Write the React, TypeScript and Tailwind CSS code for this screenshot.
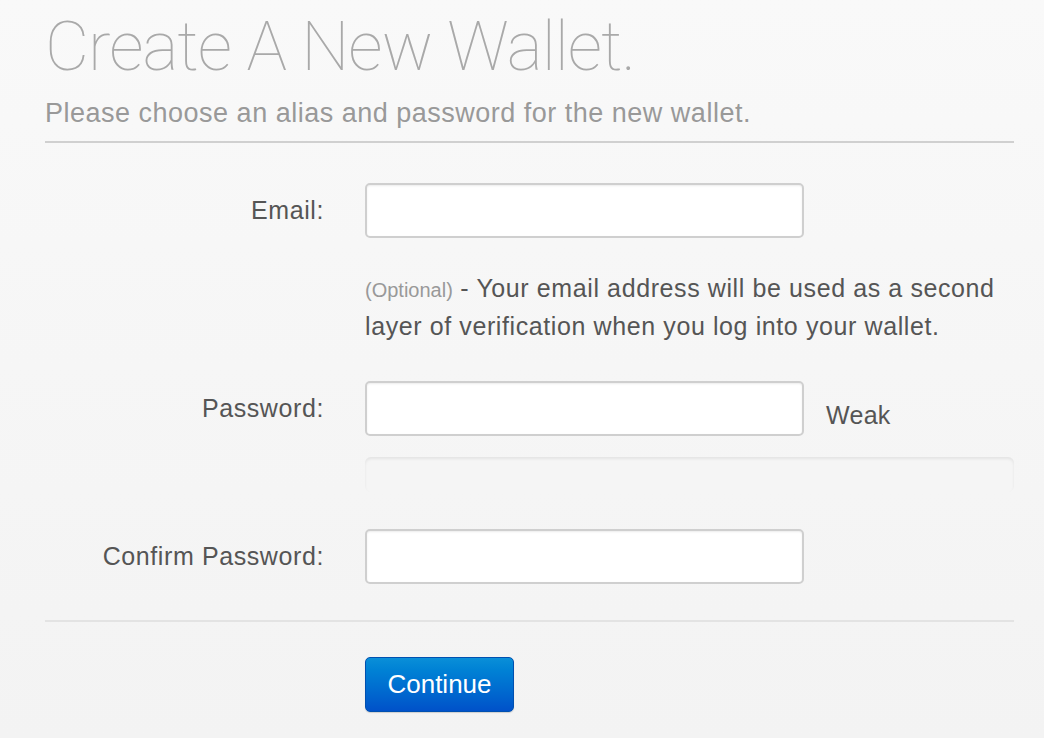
import { useState } from "react";

const LABEL = "w-[279px] shrink-0 text-right text-[25px] tracking-[0.6px] text-[#555]";
const INPUT =
  "h-[55px] w-[439px] shrink-0 rounded-[5px] border-2 border-[#cfcfcf] bg-white px-3 text-[22px] text-[#555] shadow-[inset_0_1px_2px_rgba(0,0,0,0.08)] outline-none";

function FieldRow({
  label,
  type,
  value,
  onChange,
  children,
}: {
  label: string;
  type: string;
  value: string;
  onChange: (v: string) => void;
  children?: React.ReactNode;
}) {
  return (
    <div className="flex items-center">
      <label className={LABEL}>{label}</label>
      <div className="w-[41px] shrink-0" />
      <input
        type={type}
        className={INPUT}
        value={value}
        onChange={(e) => onChange(e.target.value)}
      />
      {children}
    </div>
  );
}

export default function App() {
  const [email, setEmail] = useState("");
  const [password, setPassword] = useState("");
  const [confirm, setConfirm] = useState("");

  return (
    <div
      className="h-[738px] w-[1044px] overflow-hidden bg-gradient-to-b from-[#f9f9f9] to-[#f3f3f3] pl-[45px] pr-[30px]"
      style={{ fontFamily: '"Liberation Sans", Arial, sans-serif' }}
    >
      <h1
        className="mt-[7px] text-[68px] leading-[80px] font-thin tracking-[-1px] text-[#a9a9a9]"
        style={{ fontFamily: 'Roboto, "Liberation Sans", sans-serif' }}
      >
        Create A New Wallet.
      </h1>
      <p className="mt-[10px] text-[27px] leading-[32px] tracking-[0.5px] text-[#999]">
        Please choose an alias and password for the new wallet.
      </p>
      <hr className="mt-[12px] border-t-2 border-[#d0d0d0]" />

      <form className="flex flex-col" onSubmit={(e) => e.preventDefault()}>
        <div className="mt-[40px]">
          <FieldRow label="Email:" type="email" value={email} onChange={setEmail} />
        </div>
        <p className="mt-[32px] ml-[320px] text-[25px] leading-[36px] tracking-[0.6px] text-[#555]">
          <span className="text-[20px] tracking-normal text-[#999]">(Optional)</span> - Your email address will be used as a second
          <br />
          layer of verification when you log into your wallet.
        </p>
        <div className="mt-[37px]">
          <FieldRow label="Password:" type="password" value={password} onChange={setPassword}>
            <span className="ml-[22px] mt-[14px] text-[25px] tracking-[0.3px] text-[#555]">Weak</span>
          </FieldRow>
        </div>
        <div className="mt-[21px] ml-[320px] h-[35px] rounded-[6px] bg-[#f5f5f5] shadow-[inset_0_2px_3px_rgba(0,0,0,0.07)]" />
        <div className="mt-[37px]">
          <FieldRow label="Confirm Password:" type="password" value={confirm} onChange={setConfirm} />
        </div>
        <hr className="mt-[36px] border-t-2 border-[#e3e3e3]" />
        <div className="mt-[35px] ml-[320px]">
          <button
            type="submit"
            className="h-[55px] w-[149px] rounded-[5px] border border-[#0050b0] bg-gradient-to-b from-[#0a8fd8] to-[#0051c9] text-[26px] text-white shadow-[0_1px_1px_rgba(0,0,0,0.15)]"
          >
            Continue
          </button>
        </div>
      </form>
    </div>
  );
}
